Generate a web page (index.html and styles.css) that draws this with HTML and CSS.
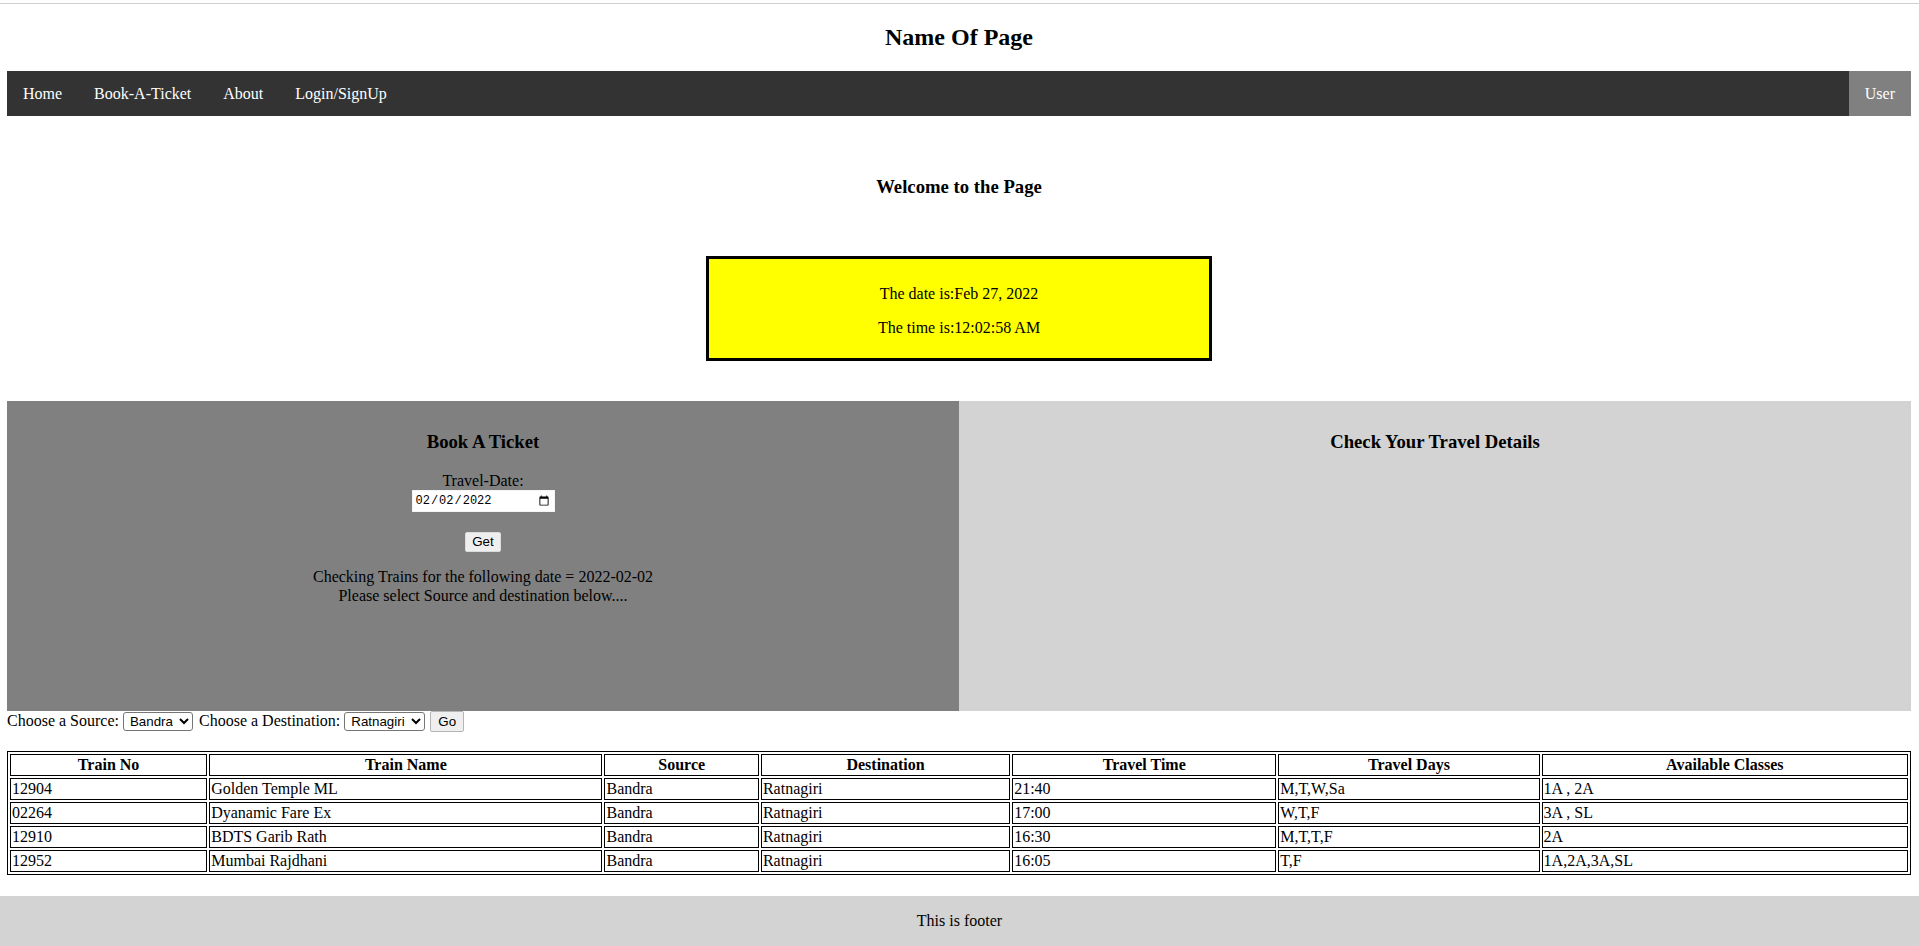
FILE: index.html
```html
<!DOCTYPE html>
<html lang="en">
<head>
<meta charset="utf-8">
<title>Name Of Page</title>
<link rel="stylesheet" href="styles.css">
</head>
<body>
<div class="topline"></div>
<div class="page">
  <h2 class="title">Name Of Page</h2>
  <nav class="topnav">
    <a href="#">Home</a>
    <a href="#">Book-A-Ticket</a>
    <a href="#">About</a>
    <a href="#">Login/SignUp</a>
    <a href="#" class="user">User</a>
  </nav>

  <h3 class="welcome">Welcome to the Page</h3>

  <div class="clock">
    <p>The date is:Feb 27, 2022</p>
    <p>The time is:12:02:58 AM</p>
  </div>

  <div class="panels">
    <div class="panel book">
      <h3>Book A Ticket</h3>
      <div class="field">
        <label for="tdate">Travel-Date:</label>
        <input id="tdate" class="date" type="date" value="2022-02-02">
      </div>
      <button class="get" type="button">Get</button>
      <p class="status">Checking Trains for the following date = 2022-02-02<br>Please select Source and destination below....</p>
    </div>
    <div class="panel check">
      <h3>Check Your Travel Details</h3>
    </div>
  </div>

  <div class="choose">
    <span>Choose a Source:</span>
    <select class="sel"><option>Bandra</option></select>
    <span class="lbl2">Choose a Destination:</span>
    <select class="sel"><option>Ratnagiri</option></select>
    <button class="go" type="button">Go</button>
  </div>

  <table class="trains">
    <thead>
      <tr>
        <th class="c1">Train No</th>
        <th class="c2">Train Name</th>
        <th class="c3">Source</th>
        <th class="c4">Destination</th>
        <th class="c5">Travel Time</th>
        <th class="c6">Travel Days</th>
        <th class="c7">Available Classes</th>
      </tr>
    </thead>
    <tbody>
      <tr><td>12904</td><td>Golden Temple ML</td><td>Bandra</td><td>Ratnagiri</td><td>21:40</td><td>M,T,W,Sa</td><td>1A , 2A</td></tr>
      <tr><td>02264</td><td>Dyanamic Fare Ex</td><td>Bandra</td><td>Ratnagiri</td><td>17:00</td><td>W,T,F</td><td>3A , SL</td></tr>
      <tr><td>12910</td><td>BDTS Garib Rath</td><td>Bandra</td><td>Ratnagiri</td><td>16:30</td><td>M,T,T,F</td><td>2A</td></tr>
      <tr><td>12952</td><td>Mumbai Rajdhani</td><td>Bandra</td><td>Ratnagiri</td><td>16:05</td><td>T,F</td><td>1A,2A,3A,SL</td></tr>
    </tbody>
  </table>
</div>
<footer class="footer">This is footer</footer>
</body>
</html>
```

FILE: styles.css
```css
html, body {
  margin: 0;
  padding: 0;
  background: #fff;
}
body {
  font-family: "Liberation Serif", "Times New Roman", serif;
  font-size: 16px;
  color: #000;
  overflow: hidden;
}
.topline {
  margin-top: 3px;
  height: 1px;
  background: #cfcfcf;
}
.page {
  padding: 0 8px 0 7px;
}
.title {
  margin: 19px 0 20px;
  font-size: 24px;
  line-height: 28px;
  font-weight: bold;
  text-align: center;
}
.topnav {
  display: flex;
  background: #333333;
  height: 45px;
}
.topnav a {
  display: block;
  color: #fff;
  text-decoration: none;
  padding: 13px 16px;
  line-height: 19px;
  font-size: 16px;
}
.topnav a.user {
  margin-left: auto;
  background: #808080;
  padding: 13px 16px;
}
.welcome {
  margin: 60px 0 0;
  font-size: 18.72px;
  text-align: center;
}
.clock {
  width: 500px;
  margin: 58px auto 0;
  border: 3px solid #000;
  background: #ffff00;
  padding: 10px 0 5px;
  text-align: center;
}
.clock p {
  margin: 16px 0;
  line-height: 18px;
}
.panels {
  display: flex;
  margin-top: 40px;
  height: 310px;
}
.panel {
  flex: 1 1 0;
  padding-top: 11px;
  text-align: center;
  line-height: 19px;
}
.panel h3 {
  margin: 18.72px 0;
  font-size: 18.72px;
  line-height: 21.5px;
}
.book {
  background: #808080;
}
.check {
  background: #d3d3d3;
}
.field label {
  display: block;
}
.date {
  box-sizing: border-box;
  width: 143px;
  height: 22px;
  margin: 0;
  padding: 1px 2px;
  border: 1px solid #f4f4f4;
  background: #fff;
  font-family: "Liberation Mono", "DejaVu Sans Mono", monospace;
  font-size: 12px;
  color: #000;
  vertical-align: top;
}
.get {
  display: block;
  margin: 20px auto 0;
  height: 20px;
  padding: 1px 6px;
  font-family: "Liberation Sans", Arial, sans-serif;
  font-size: 13.33px;
  background: #efefef;
  border: 1px solid #dcdcdc;
  border-radius: 2px;
  color: #000;
}
.status {
  margin: 15px 0 0;
}
.choose {
  height: 20px;
  line-height: 20px;
  display: flex;
  align-items: center;
  gap: 4px;
  white-space: nowrap;
}
.lbl2 {
  margin-left: 2px;
}
.sel {
  height: 19px;
  font-family: "Liberation Sans", Arial, sans-serif;
  font-size: 13.33px;
  border: 1px solid #767676;
  border-radius: 3px;
  background: #fff;
  color: #000;
  padding: 0 3px 0 2px;
}
.go {
  height: 21px;
  margin-left: 1px;
  padding: 1px 7px;
  font-family: "Liberation Sans", Arial, sans-serif;
  font-size: 13.33px;
  background: #efefef;
  border: 1px solid #b5b5b5;
  border-radius: 2px;
  color: #000;
}
.trains {
  width: 100%;
  margin-top: 20px;
  border: 1px solid #000;
  border-spacing: 2px;
  table-layout: fixed;
}
.trains th,
.trains td {
  border: 1px solid #000;
  padding: 1px;
  line-height: 18px;
  font-size: 16px;
}
.trains th {
  text-align: center;
  font-weight: bold;
}
.trains td {
  text-align: left;
}
.c1 { width: 10.4%; }
.c2 { width: 20.95%; }
.c3 { width: 8.1%; }
.c4 { width: 13.2%; }
.c5 { width: 14%; }
.c6 { width: 13.85%; }
.c7 { width: 19.5%; }
.footer {
  margin-top: 21px;
  background: #d3d3d3;
  height: 50px;
  line-height: 50px;
  text-align: center;
}
```
